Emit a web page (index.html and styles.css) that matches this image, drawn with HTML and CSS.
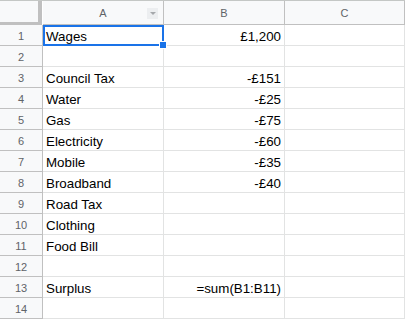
FILE: index.html
```html
<!DOCTYPE html>
<html>
<head>
<meta charset="utf-8">
<link rel="stylesheet" href="styles.css">
</head>
<body>
<div class="sheet">
  <div class="corner"></div>
  <div class="colhead">A<span class="drop"></span></div>
  <div class="colhead">B</div>
  <div class="colhead">C</div>

  <div class="rowhead">1</div><div class="cell selected">Wages<span class="handle"></span></div><div class="cell num">£1,200</div><div class="cell"></div>
  <div class="rowhead">2</div><div class="cell"></div><div class="cell num"></div><div class="cell"></div>
  <div class="rowhead">3</div><div class="cell">Council Tax</div><div class="cell num">-£151</div><div class="cell"></div>
  <div class="rowhead">4</div><div class="cell">Water</div><div class="cell num">-£25</div><div class="cell"></div>
  <div class="rowhead">5</div><div class="cell">Gas</div><div class="cell num">-£75</div><div class="cell"></div>
  <div class="rowhead">6</div><div class="cell">Electricity</div><div class="cell num">-£60</div><div class="cell"></div>
  <div class="rowhead">7</div><div class="cell">Mobile</div><div class="cell num">-£35</div><div class="cell"></div>
  <div class="rowhead">8</div><div class="cell">Broadband</div><div class="cell num">-£40</div><div class="cell"></div>
  <div class="rowhead">9</div><div class="cell">Road Tax</div><div class="cell num"></div><div class="cell"></div>
  <div class="rowhead">10</div><div class="cell">Clothing</div><div class="cell num"></div><div class="cell"></div>
  <div class="rowhead">11</div><div class="cell">Food Bill</div><div class="cell num"></div><div class="cell"></div>
  <div class="rowhead">12</div><div class="cell"></div><div class="cell num"></div><div class="cell"></div>
  <div class="rowhead">13</div><div class="cell">Surplus</div><div class="cell num">=sum(B1:B11)</div><div class="cell"></div>
  <div class="rowhead">14</div><div class="cell"></div><div class="cell num"></div><div class="cell"></div>
</div>
</body>
</html>
```
FILE: styles.css
```css
html, body {
  margin: 0;
  padding: 0;
  background: #ffffff;
}
.sheet {
  display: grid;
  grid-template-columns: 43px 121px 121px 1fr;
  grid-template-rows: 24px;
  grid-auto-rows: 21px;
  border-top: 1px solid #c4c7c5;
  font-family: "Liberation Sans", Arial, sans-serif;
  width: 405px;
  overflow: hidden;
}
.corner {
  background: #f8f9fa;
  box-sizing: border-box;
  border-right: 4px solid #c0c0c0;
  border-bottom: 3px solid #c0c0c0;
  margin-right: 1px;
}
.colhead {
  position: relative;
  background: #f8f9fa;
  box-sizing: border-box;
  border-right: 1px solid #c0c0c0;
  border-bottom: 1px solid #c0c0c0;
  color: #5f6368;
  font-size: 11px;
  display: flex;
  align-items: center;
  justify-content: center;
  padding-top: 1px;
}
.colhead:last-child { border-right: none; }
.drop {
  position: absolute;
  left: 104px;
  top: 7px;
  width: 11px;
  height: 11px;
  background: #eceef0;
}
.drop::after {
  content: "";
  position: absolute;
  left: 3px;
  top: 4px;
  border-left: 3px solid transparent;
  border-right: 3px solid transparent;
  border-top: 3px solid #a5a8ab;
}
.rowhead {
  background: #f8f9fa;
  box-sizing: border-box;
  border-right: 1px solid #c0c0c0;
  border-bottom: 1px solid #c0c0c0;
  color: #5f6368;
  font-size: 11px;
  display: flex;
  align-items: center;
  justify-content: center;
  padding-top: 2px;
}
.cell {
  position: relative;
  box-sizing: border-box;
  border-right: 1px solid #e2e3e3;
  border-bottom: 1px solid #e2e3e3;
  font-size: 13.33px;
  color: #000000;
  padding: 0 3px;
  display: flex;
  align-items: center;
  white-space: nowrap;
  padding-top: 2px;
}
.num { justify-content: flex-end; }
.selected {
  outline: 2px solid #1a73e8;
  outline-offset: -2px;
  z-index: 2;
}
.handle {
  position: absolute;
  right: -4px;
  bottom: -4px;
  width: 6px;
  height: 6px;
  background: #1a73e8;
  border: 1px solid #ffffff;
}
```
